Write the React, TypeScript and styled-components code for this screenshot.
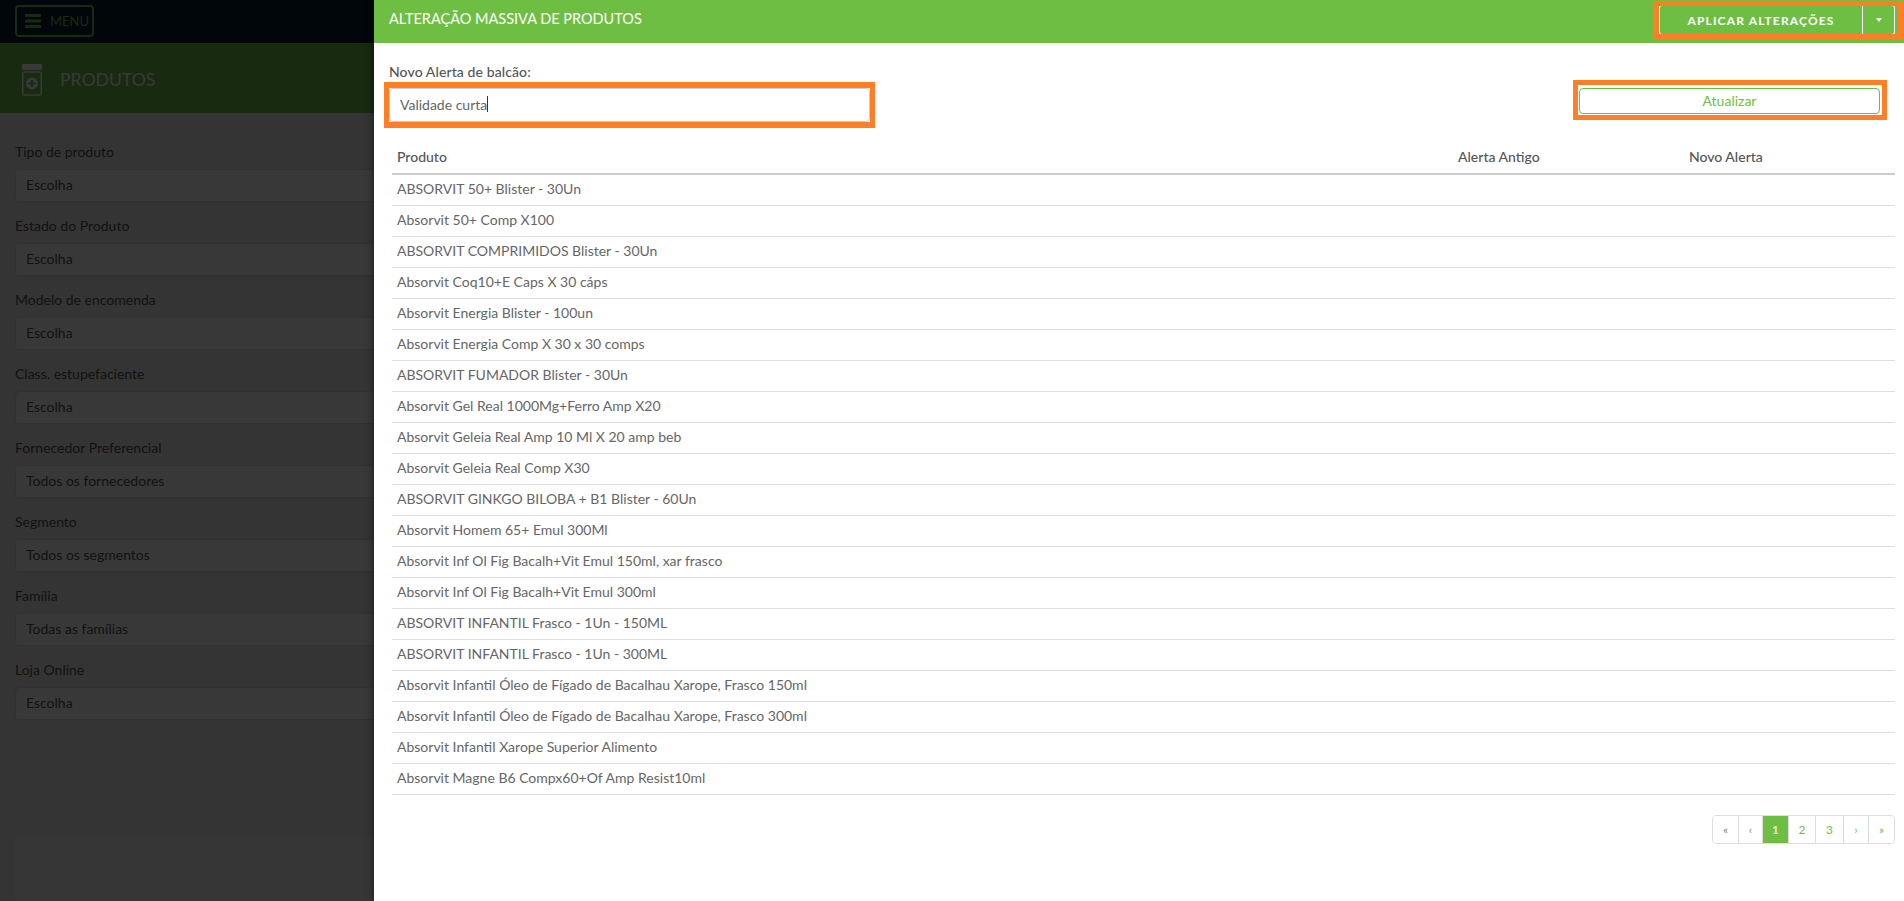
import React from "react";
import styled, { createGlobalStyle } from "styled-components";

const Global = createGlobalStyle`
  html, body { margin: 0; padding: 0; height: 100%; overflow: hidden; }
  body { font-family: Lato, "Open Sans", "Liberation Sans", sans-serif; font-size: 14px; color: #555; background: #fff; }
  * { box-sizing: border-box; }
`;

const Page = styled.div`
  width: 1904px;
  height: 901px;
  position: relative;
  overflow: hidden;
  display: flex;
  flex-direction: column;
`;

const TopBar = styled.header`
  height: 43px;
  background: #051b2d;
  padding: 5px 15px;
  flex: none;
`;

const MenuButton = styled.div`
  width: 79px;
  height: 32px;
  border: 2px solid #6fbe44;
  border-radius: 4px;
  display: flex;
  align-items: center;
  gap: 9px;
  padding-left: 8px;
  color: #6fbe44;
  font-size: 13px;
`;

const TitleBar = styled.div`
  height: 70px;
  background: #6fbe44;
  flex: none;
  display: flex;
  align-items: center;
  gap: 18px;
  padding: 3px 22px 0;
  font-size: 17.6px;
  color: #fff;
`;

const FilterList = styled.div`
  padding: 29px 15px 0;
  background: #ececec;
  flex: 1;
  display: flex;
  flex-direction: column;
  gap: 14px;
`;

const Field = styled.div`
  display: flex;
  flex-direction: column;
  gap: 7px;
`;

const FieldLabel = styled.label`
  font-size: 14px;
  line-height: 20px;
  color: #555;
`;

const FieldValue = styled.div`
  height: 33px;
  border: 1px solid #ddd;
  border-radius: 4px;
  background: #fff;
  padding: 0 10px;
  line-height: 29px;
  width: 700px;
`;

const BottomPanel = styled.div`
  position: absolute;
  left: 15px;
  top: 837px;
  width: 700px;
  height: 64px;
  background: #fff;
  opacity: 0.5;
  border-radius: 4px;
`;

const Backdrop = styled.div`
  position: absolute;
  inset: 0;
  background: rgba(0, 0, 0, 0.78);
`;

const Drawer = styled.aside`
  position: absolute;
  top: 0;
  right: 0;
  bottom: 0;
  width: 1530px;
  background: #fff;
  box-shadow: 0 0 8px rgba(0, 0, 0, 0.5);
  display: flex;
  flex-direction: column;
`;

const DrawerHeader = styled.div`
  height: 43px;
  flex: none;
  background: #6fbe44;
  display: flex;
  align-items: flex-start;
  justify-content: space-between;
  padding: 5px 9px 0 15px;
`;

const DrawerTitle = styled.h1`
  margin: 0;
  font-size: 14.5px;
  line-height: 28px;
  font-weight: 400;
  color: #fff;
`;

const ApplyGroup = styled.div`
  position: relative;
  width: 236px;
  height: 30px;
  border: 1px solid #fff;
  border-radius: 3px;
  display: flex;
  color: #fff;
`;

const Highlight = styled.span`
  position: absolute;
  top: -5px;
  left: -6px;
  right: -9px;
  bottom: -5px;
  border: 5px solid #ff7f27;
  pointer-events: none;
`;

const ApplyLabel = styled.div`
  flex: 1;
  display: flex;
  align-items: center;
  justify-content: center;
  font-size: 12px;
  font-weight: 700;
  letter-spacing: 1.15px;
`;

const ApplyCaret = styled.div`
  width: 32px;
  border-left: 1px solid #fff;
  display: flex;
  align-items: center;
  justify-content: center;
  &::after {
    content: "";
    border-left: 3.5px solid transparent;
    border-right: 3.5px solid transparent;
    border-top: 4px solid #fff;
  }
`;

const Form = styled.div`
  display: flex;
  justify-content: space-between;
  padding: 19px 17px 0 15px;
  height: 94px;
  flex: none;
`;

const AlertField = styled.div`
  display: flex;
  flex-direction: column;
  width: 481px;
`;

const AlertLabel = styled.label`
  font-size: 14px;
  line-height: 20px;
  font-weight: 500;
  letter-spacing: 0.1px;
  color: #555;
`;

const OrangeFrame = styled.div`
  border-style: solid;
  border-color: #ff7f27;
  border-width: 6px 5px;
  margin: 0 -5px;
`;

const AlertInput = styled.div`
  height: 34px;
  border: 1px solid #ccc;
  border-radius: 4px;
  padding: 0 10px 2px;
  color: #666;
  display: flex;
  align-items: center;
`;

const Cursor = styled.span`
  width: 1px;
  height: 16px;
  background: #333;
`;

const UpdateFrame = styled.div`
  border: 5px solid #ff7f27;
  padding: 3px 2px 1px 1px;
  width: 314px;
  height: 40px;
  margin-top: 18px;
`;

const UpdateButton = styled.div`
  height: 26px;
  border: 1px solid #6fbe44;
  border-radius: 4px;
  color: #6fbe44;
  text-align: center;
  line-height: 24px;
`;

const Table = styled.div`
  margin: 0 9px 0 18px;
  flex: none;
`;

const HeadRow = styled.div`
  display: grid;
  grid-template-columns: 1061px 231px 1fr;
  height: 38px;
  align-items: center;
  padding: 3px 0 0 5px;
  border-bottom: 2px solid #ccc;
  font-weight: 500;
  color: #555;
`;

const Row = styled.div`
  height: 31px;
  padding-left: 5px;
  line-height: 28px;
  border-bottom: 1px solid #ddd;
  color: #666;
`;

const Pagination = styled.nav`
  align-self: flex-end;
  margin: 20px 9px 0 0;
  display: flex;
  height: 29px;
  border: 1px solid #ddd;
  border-radius: 4px;
  overflow: hidden;
`;

const PageItem = styled.span<{ $active?: boolean; $muted?: boolean; $w: number }>`
  width: ${(p) => p.$w}px;
  display: flex;
  align-items: center;
  justify-content: center;
  font-size: 12px;
  background: ${(p) => (p.$active ? "#6fbe44" : "#fff")};
  color: ${(p) => (p.$active ? "#fff" : p.$muted ? "#888" : "#6fbe44")};
  & + & { border-left: 1px solid #ddd; }
`;

const filters = [
  ["Tipo de produto", "Escolha"],
  ["Estado do Produto", "Escolha"],
  ["Modelo de encomenda", "Escolha"],
  ["Class. estupefaciente", "Escolha"],
  ["Fornecedor Preferencial", "Todos os fornecedores"],
  ["Segmento", "Todos os segmentos"],
  ["Família", "Todas as famílias"],
  ["Loja Online", "Escolha"],
];

const products = [
  "ABSORVIT 50+ Blister - 30Un",
  "Absorvit 50+ Comp X100",
  "ABSORVIT COMPRIMIDOS Blister - 30Un",
  "Absorvit Coq10+E Caps X 30 cáps",
  "Absorvit Energia Blister - 100un",
  "Absorvit Energia Comp X 30 x 30 comps",
  "ABSORVIT FUMADOR Blister - 30Un",
  "Absorvit Gel Real 1000Mg+Ferro Amp X20",
  "Absorvit Geleia Real Amp 10 Ml X 20 amp beb",
  "Absorvit Geleia Real Comp X30",
  "ABSORVIT GINKGO BILOBA + B1 Blister - 60Un",
  "Absorvit Homem 65+ Emul 300Ml",
  "Absorvit Inf Ol Fig Bacalh+Vit Emul 150ml, xar frasco",
  "Absorvit Inf Ol Fig Bacalh+Vit Emul 300ml",
  "ABSORVIT INFANTIL Frasco - 1Un - 150ML",
  "ABSORVIT INFANTIL Frasco - 1Un - 300ML",
  "Absorvit Infantil Óleo de Fígado de Bacalhau Xarope, Frasco 150ml",
  "Absorvit Infantil Óleo de Fígado de Bacalhau Xarope, Frasco 300ml",
  "Absorvit Infantil Xarope Superior Alimento",
  "Absorvit Magne B6 Compx60+Of Amp Resist10ml",
];

const pages: { t: string; w: number; active?: boolean; muted?: boolean }[] = [
  { t: "«", w: 25, muted: true },
  { t: "‹", w: 24, muted: true },
  { t: "1", w: 26, active: true },
  { t: "2", w: 27 },
  { t: "3", w: 28 },
  { t: "›", w: 25 },
  { t: "»", w: 26 },
];

export default function App() {
  return (
    <Page>
      <Global />
      <TopBar>
        <MenuButton>
          <svg width="16" height="14" viewBox="0 0 16 14" fill="#6fbe44">
            <rect width="16" height="3" y="0" />
            <rect width="16" height="3" y="5.5" />
            <rect width="16" height="3" y="11" />
          </svg>
          MENU
        </MenuButton>
      </TopBar>
      <TitleBar>
        <svg width="20" height="32" viewBox="0 0 20 32" fill="none">
          <rect x="0" y="0" width="20" height="6" rx="1" fill="#fff" />
          <rect x="0.75" y="8" width="18.5" height="23" rx="1.5" stroke="#fff" strokeWidth="1.5" />
          <circle cx="10" cy="19.5" r="6" fill="#fff" />
          <path d="M10 16v7M6.5 19.5h7" stroke="#6fbe44" strokeWidth="2" />
        </svg>
        PRODUTOS
      </TitleBar>
      <FilterList>
        {filters.map(([l, v]) => (
          <Field key={l}>
            <FieldLabel>{l}</FieldLabel>
            <FieldValue>{v}</FieldValue>
          </Field>
        ))}
      </FilterList>
      <BottomPanel />
      <Backdrop />
      <Drawer>
        <DrawerHeader>
          <DrawerTitle>ALTERAÇÃO MASSIVA DE PRODUTOS</DrawerTitle>
          <ApplyGroup>
            <ApplyLabel>APLICAR ALTERAÇÕES</ApplyLabel>
            <ApplyCaret />
            <Highlight />
          </ApplyGroup>
        </DrawerHeader>
        <Form>
          <AlertField>
            <AlertLabel>Novo Alerta de balcão:</AlertLabel>
            <OrangeFrame>
              <AlertInput>
                Validade curta
                <Cursor />
              </AlertInput>
            </OrangeFrame>
          </AlertField>
          <UpdateFrame>
            <UpdateButton>Atualizar</UpdateButton>
          </UpdateFrame>
        </Form>
        <Table>
          <HeadRow>
            <span>Produto</span>
            <span>Alerta Antigo</span>
            <span>Novo Alerta</span>
          </HeadRow>
          {products.map((p) => (
            <Row key={p}>{p}</Row>
          ))}
        </Table>
        <Pagination>
          {pages.map((p) => (
            <PageItem key={p.t} $w={p.w} $active={p.active} $muted={p.muted}>
              {p.t}
            </PageItem>
          ))}
        </Pagination>
      </Drawer>
    </Page>
  );
}
